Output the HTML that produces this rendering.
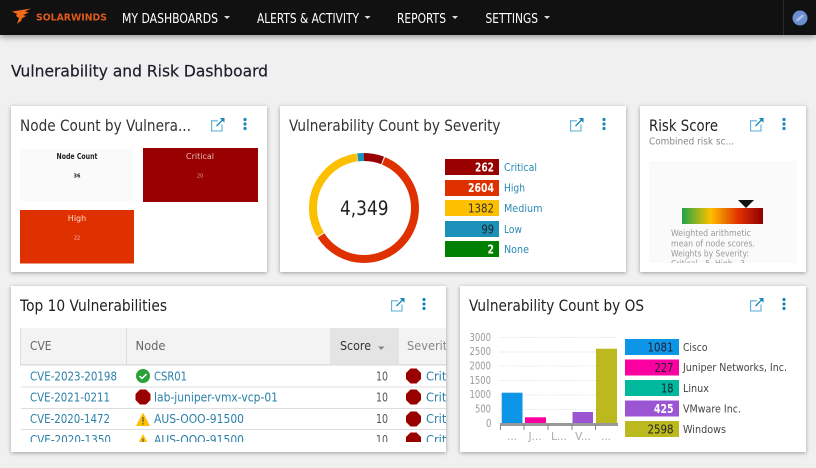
<!DOCTYPE html>
<html><head><meta charset="utf-8"><title>Vulnerability and Risk Dashboard</title>
<style>
html,body{margin:0;padding:0;width:816px;height:468px;overflow:hidden;background:#f0f0f0}
.c{position:absolute;background:#fff;box-shadow:0 1px 4px rgba(0,0,0,.35)}
.h{position:absolute;left:0;top:0;width:816px;height:35px;background:#111;box-shadow:0 2px 6px rgba(0,0,0,.4)}
svg{position:absolute;left:0;top:0;filter:blur(.3px)}
text{font-family:"DejaVu Sans","Liberation Sans",sans-serif}
.t{font-size:16px;fill:#333}
.lk{font-size:12.5px;fill:#2a80aa}
.lg{font-size:11px;fill:#2a8ab5}
.lo{font-size:11px;fill:#444}
.v{font-size:12px;text-anchor:end}
</style></head><body>
<div class="h"></div>
<div class="c" style="left:11px;top:106px;width:256px;height:166px"></div>
<div class="c" style="left:280px;top:106px;width:346px;height:166px"></div>
<div class="c" style="left:640px;top:106px;width:166px;height:166px"></div>
<div class="c" style="left:11px;top:286px;width:435px;height:166px"></div>
<div class="c" style="left:460px;top:286px;width:346px;height:166px"></div>
<svg width="816" height="468" viewBox="0 0 816 468">
<defs>
<clipPath id="tb"><rect x="20" y="328" width="426" height="114"/></clipPath>
<clipPath id="rk"><rect x="649" y="161" width="148" height="102"/></clipPath>
<linearGradient id="gr"><stop offset="0" stop-color="#1fa34a"/><stop offset=".35" stop-color="#fdc000"/><stop offset=".7" stop-color="#df3100"/><stop offset="1" stop-color="#8f0000"/></linearGradient>
<g id="pop"><path d="M7 2.800H.6V13h10.400V6.500" fill="none" stroke="#5aaed6" stroke-width="1.100"/><path d="M5.500 8L11.500 2" stroke="#1a86b8" stroke-width="1.300"/><path d="M8.800 0H13.500V4.700Z" fill="#1a86b8"/></g>
<g id="dots" fill="#1a86b8"><circle cx="0" cy="1.500" r="1.600"/><circle cx="0" cy="6" r="1.600"/><circle cx="0" cy="10.500" r="1.600"/></g>
<path id="oct" d="M-3-7.500H3L7.500-3V3L3 7.500H-3L-7.500 3V-3Z" fill="#990000"/>
<g id="tri"><path d="M0-7L7 6.500H-7Z" fill="#fdc000"/><path d="M0-2.500V2.500M0 3.500V5" stroke="#664" stroke-width="1.400"/></g>
</defs>

<!-- header -->
<path d="M12 11.500L31 8.500L25 11.500L29 12.500L23 15L26 16L21 19L22 20L17 24L19 18L16 16L17 14Z" fill="#f26a1b"/>
<text x="36" y="20.500" font-size="10" font-weight="bold" fill="#e0591b" textLength="71" lengthAdjust="spacingAndGlyphs">SOLARWINDS</text>
<g font-size="13.500" fill="#fff">
<text x="122" y="23" textLength="96" lengthAdjust="spacingAndGlyphs">MY DASHBOARDS</text>
<text x="257" y="23" textLength="102" lengthAdjust="spacingAndGlyphs">ALERTS &amp; ACTIVITY</text>
<text x="397" y="23" textLength="49" lengthAdjust="spacingAndGlyphs">REPORTS</text>
<text x="485.500" y="23" textLength="52.500" lengthAdjust="spacingAndGlyphs">SETTINGS</text>
</g>
<g fill="#ddd"><path d="M224 16H230L227 19Z"/><path d="M364.500 16H370.500L367.500 19Z"/><path d="M452 16H458L455 19Z"/><path d="M544 16H550L547 19Z"/></g>
<rect x="783" y="0" width="1" height="35" fill="#2a2a2a"/>
<circle cx="800" cy="18" r="7.500" fill="#6b8ed0"/>
<path d="M797.500 20L802.500 16" stroke="#c9d6f2" stroke-width="2.500" stroke-linecap="round" opacity=".7"/>

<text x="11" y="76.500" font-size="16" fill="#1c1c2a" stroke="#1c1c2a" stroke-width=".2" textLength="257" lengthAdjust="spacingAndGlyphs">Vulnerability and Risk Dashboard</text>

<!-- card 1 -->
<text class="t" x="20" y="131" textLength="171" lengthAdjust="spacingAndGlyphs">Node Count by Vulnera...</text>
<use href="#pop" x="211" y="118"/><use href="#dots" x="245" y="118"/>
<rect x="20" y="149" width="114" height="52" fill="#fafafa"/>
<rect x="143" y="148" width="115" height="54" fill="#990000"/>
<rect x="20" y="210" width="114" height="53.500" fill="#df3100"/>
<g text-anchor="middle">
<text x="77" y="159" font-size="7.500" font-weight="bold" fill="#222" textLength="41" lengthAdjust="spacingAndGlyphs">Node Count</text>
<text x="77" y="177.500" font-size="5" font-weight="bold" fill="#222">36</text>
<text x="200" y="159" font-size="8" fill="#e6bcbc">Critical</text>
<text x="200" y="177.500" font-size="5" fill="#d99">20</text>
<text x="77" y="221" font-size="8" fill="#ffd9cc">High</text>
<text x="77" y="239.500" font-size="5" fill="#fbb">22</text>
</g>

<!-- card 2 -->
<text class="t" x="289" y="131" textLength="211.500" lengthAdjust="spacingAndGlyphs">Vulnerability Count by Severity</text>
<use href="#pop" x="570" y="118"/><use href="#dots" x="604" y="118"/>
<g fill="none" stroke-width="8" transform="rotate(-90 364 208)">
<circle cx="364" cy="208" r="51" stroke="#990000" stroke-dasharray="19 320"/>
<circle cx="364" cy="208" r="51" stroke="#df3100" stroke-dasharray="191 330" stroke-dashoffset="-20"/>
<circle cx="364" cy="208" r="51" stroke="#fdc000" stroke-dasharray="101 330" stroke-dashoffset="-212"/>
<circle cx="364" cy="208" r="51" stroke="#1b90b8" stroke-dasharray="6.500 330" stroke-dashoffset="-313.500"/>
</g>
<text x="340" y="215" font-size="19.500" fill="#222" textLength="48.500" lengthAdjust="spacingAndGlyphs">4,349</text>
<rect x="445" y="159" width="54" height="16" fill="#990000"/>
<rect x="445" y="180" width="54" height="16" fill="#df3100"/>
<rect x="445" y="200" width="54" height="16" fill="#fdc000"/>
<rect x="445" y="221" width="54" height="16" fill="#1b90b8"/>
<rect x="445" y="241" width="54" height="16" fill="#008000"/>
<g font-size="12">
<text x="475" y="171.500" fill="#fff" font-weight="bold" textLength="19" lengthAdjust="spacingAndGlyphs">262</text>
<text x="468" y="192" fill="#fff" font-weight="bold" textLength="26" lengthAdjust="spacingAndGlyphs">2604</text>
<text x="468" y="212.500" fill="#333" textLength="26" lengthAdjust="spacingAndGlyphs">1382</text>
<text x="481.500" y="233.500" fill="#222" textLength="12.500" lengthAdjust="spacingAndGlyphs">99</text>
<text x="487.500" y="253.500" fill="#fff" font-weight="bold" textLength="6.500" lengthAdjust="spacingAndGlyphs">2</text>
</g>
<text class="lg" x="504" y="171" textLength="33" lengthAdjust="spacingAndGlyphs">Critical</text>
<text class="lg" x="504" y="191.500" textLength="21" lengthAdjust="spacingAndGlyphs">High</text>
<text class="lg" x="504" y="212" textLength="38.500" lengthAdjust="spacingAndGlyphs">Medium</text>
<text class="lg" x="504" y="233" textLength="18" lengthAdjust="spacingAndGlyphs">Low</text>
<text class="lg" x="504" y="253" textLength="25" lengthAdjust="spacingAndGlyphs">None</text>

<!-- card 3 -->
<text class="t" x="649" y="131" style="fill:#222" textLength="69" lengthAdjust="spacingAndGlyphs">Risk Score</text>
<text x="649" y="144.500" font-size="10" fill="#888" textLength="85" lengthAdjust="spacingAndGlyphs">Combined risk sc...</text>
<use href="#pop" x="750" y="118"/><use href="#dots" x="784" y="118"/>
<rect x="649" y="161" width="148" height="102" fill="#fafafa"/>
<rect x="682" y="208" width="81" height="16" fill="url(#gr)"/>
<path d="M738 200H754L746 208Z" fill="#111"/>
<g clip-path="url(#rk)" font-size="8.500" fill="#999">
<text x="671" y="236" textLength="80" lengthAdjust="spacingAndGlyphs">Weighted arithmetic</text>
<text x="671" y="246.500" textLength="84" lengthAdjust="spacingAndGlyphs">mean of node scores.</text>
<text x="671" y="256.500" textLength="78" lengthAdjust="spacingAndGlyphs">Weights by Severity:</text>
<text x="671" y="266.500" textLength="74" lengthAdjust="spacingAndGlyphs">Critical - 5, High - 3</text>
</g>

<!-- card 4 -->
<text class="t" x="20" y="311" style="fill:#222" textLength="147" lengthAdjust="spacingAndGlyphs">Top 10 Vulnerabilities</text>
<use href="#pop" x="391" y="298"/><use href="#dots" x="424" y="298"/>
<g clip-path="url(#tb)">
<rect x="20" y="328" width="426" height="36" fill="#f3f3f3"/>
<rect x="330" y="328" width="67.500" height="36" fill="#e4e4e4"/>
<rect x="20" y="364" width="426" height="1.500" fill="#ddd"/>
<rect x="20" y="328" width="1" height="36" fill="#ddd"/>
<rect x="126" y="328" width="1" height="36" fill="#ddd"/>
<rect x="397.500" y="328" width="1" height="36" fill="#ddd"/>
<text x="30" y="350" font-size="12" fill="#666" textLength="21.500" lengthAdjust="spacingAndGlyphs">CVE</text>
<text x="135.500" y="350" font-size="12" fill="#666" textLength="30" lengthAdjust="spacingAndGlyphs">Node</text>
<text x="340" y="350" font-size="12" fill="#333" textLength="31" lengthAdjust="spacingAndGlyphs">Score</text>
<path d="M378 346.500H384.500L381.200 350Z" fill="#888"/>
<text x="407" y="350" font-size="12" fill="#888" textLength="47" lengthAdjust="spacingAndGlyphs">Severity</text>
<rect x="21" y="386.500" width="425" height="1" fill="#ddd"/>
<rect x="21" y="408" width="425" height="1" fill="#ddd"/>
<rect x="21" y="429" width="425" height="1" fill="#ddd"/>
<text class="lk" x="30" y="380.500" textLength="87" lengthAdjust="spacingAndGlyphs">CVE-2023-20198</text>
<text class="lk" x="30" y="401.500" textLength="80" lengthAdjust="spacingAndGlyphs">CVE-2021-0211</text>
<text class="lk" x="30" y="423" textLength="80" lengthAdjust="spacingAndGlyphs">CVE-2020-1472</text>
<text class="lk" x="30" y="444" textLength="81" lengthAdjust="spacingAndGlyphs">CVE-2020-1350</text>
<circle cx="143" cy="376" r="7" fill="#2ba13a"/><path d="M139.500 376L142 378.500L146.500 374" fill="none" stroke="#fff" stroke-width="1.500"/>
<use href="#oct" x="143" y="397"/>
<use href="#tri" x="143" y="419.500"/>
<use href="#tri" x="143" y="441"/>
<text class="lk" x="154" y="380.500" textLength="33" lengthAdjust="spacingAndGlyphs">CSR01</text>
<text class="lk" x="154" y="401.500" textLength="124" lengthAdjust="spacingAndGlyphs">lab-juniper-vmx-vcp-01</text>
<text class="lk" x="154" y="423" textLength="90" lengthAdjust="spacingAndGlyphs">AUS-OOO-91500</text>
<text class="lk" x="154" y="444" textLength="90" lengthAdjust="spacingAndGlyphs">AUS-OOO-91500</text>
<g font-size="12.500" fill="#555"><text x="376" y="380.500" textLength="12" lengthAdjust="spacingAndGlyphs">10</text><text x="376" y="401.500" textLength="12" lengthAdjust="spacingAndGlyphs">10</text><text x="376" y="423" textLength="12" lengthAdjust="spacingAndGlyphs">10</text><text x="376" y="444" textLength="12" lengthAdjust="spacingAndGlyphs">10</text></g>
<use href="#oct" x="413.500" y="376"/><use href="#oct" x="413.500" y="397"/><use href="#oct" x="413.500" y="419"/><use href="#oct" x="413.500" y="440"/>
<text class="lk" x="426" y="380.500" textLength="40" lengthAdjust="spacingAndGlyphs">Critical</text>
<text class="lk" x="426" y="401.500" textLength="40" lengthAdjust="spacingAndGlyphs">Critical</text>
<text class="lk" x="426" y="423" textLength="40" lengthAdjust="spacingAndGlyphs">Critical</text>
<text class="lk" x="426" y="444" textLength="40" lengthAdjust="spacingAndGlyphs">Critical</text>
</g>

<!-- card 5 -->
<text class="t" x="469" y="311" style="fill:#222" textLength="175" lengthAdjust="spacingAndGlyphs">Vulnerability Count by OS</text>
<use href="#pop" x="750" y="298"/><use href="#dots" x="784" y="298"/>
<g font-size="11" fill="#999">
<text x="469.500" y="341" textLength="21.500" lengthAdjust="spacingAndGlyphs">3000</text>
<text x="469.500" y="355" textLength="21.500" lengthAdjust="spacingAndGlyphs">2500</text>
<text x="469.500" y="369.500" textLength="21.500" lengthAdjust="spacingAndGlyphs">2000</text>
<text x="469.500" y="384" textLength="21.500" lengthAdjust="spacingAndGlyphs">1500</text>
<text x="469.500" y="398" textLength="21.500" lengthAdjust="spacingAndGlyphs">1000</text>
<text x="475" y="412.500" textLength="16" lengthAdjust="spacingAndGlyphs">500</text>
<text x="486" y="427" textLength="5.500" lengthAdjust="spacingAndGlyphs">0</text>
</g>
<g stroke="#ddd" stroke-dasharray="1 1.500"><path d="M500 337.500H617M500 352H617M500 366H617M500 380.500H617M500 395H617M500 409.500H617"/></g>
<rect x="501.700" y="392.700" width="20.800" height="31" fill="#0d96e8"/>
<rect x="525" y="417.300" width="21" height="6.500" fill="#fb00a0"/>
<rect x="572.500" y="412" width="20.500" height="12" fill="#9b55d3"/>
<rect x="596" y="348.700" width="21" height="75" fill="#bcb91f"/>
<rect x="500" y="423" width="118" height="3" fill="#999"/>
<path d="M500.500 424V430M524 424V430M548 424V430M572 424V430M595.500 424V430" stroke="#888" stroke-width="1"/>
<g font-size="10.500" fill="#aaa" text-anchor="middle"><text x="512" y="440">...</text><text x="535" y="440">J...</text><text x="559" y="440">L...</text><text x="583" y="440">V...</text><text x="606" y="440">...</text></g>
<rect x="625" y="339" width="54" height="16" fill="#0d96e8"/>
<rect x="625" y="359.500" width="54" height="16" fill="#fb00a0"/>
<rect x="625" y="380" width="54" height="16" fill="#00b89c"/>
<rect x="625" y="400.500" width="54" height="16" fill="#9b55d3"/>
<rect x="625" y="421" width="54" height="16" fill="#bcb91f"/>
<g font-size="12">
<text x="647.500" y="351.500" fill="#223" textLength="26" lengthAdjust="spacingAndGlyphs">1081</text>
<text x="654.500" y="372" fill="#222" textLength="19" lengthAdjust="spacingAndGlyphs">227</text>
<text x="661" y="392.500" fill="#123" textLength="12.500" lengthAdjust="spacingAndGlyphs">18</text>
<text x="654" y="413" fill="#fff" font-weight="bold" textLength="19.500" lengthAdjust="spacingAndGlyphs">425</text>
<text x="647.500" y="433.500" fill="#222" textLength="26" lengthAdjust="spacingAndGlyphs">2598</text>
</g>
<text class="lo" x="683" y="351" textLength="24.500" lengthAdjust="spacingAndGlyphs">Cisco</text>
<text class="lo" x="683" y="371" textLength="104" lengthAdjust="spacingAndGlyphs">Juniper Networks, Inc.</text>
<text class="lo" x="683" y="392" textLength="26" lengthAdjust="spacingAndGlyphs">Linux</text>
<text class="lo" x="683" y="412.500" textLength="58" lengthAdjust="spacingAndGlyphs">VMware Inc.</text>
<text class="lo" x="683" y="433" textLength="43" lengthAdjust="spacingAndGlyphs">Windows</text>
</svg>
</body></html>
